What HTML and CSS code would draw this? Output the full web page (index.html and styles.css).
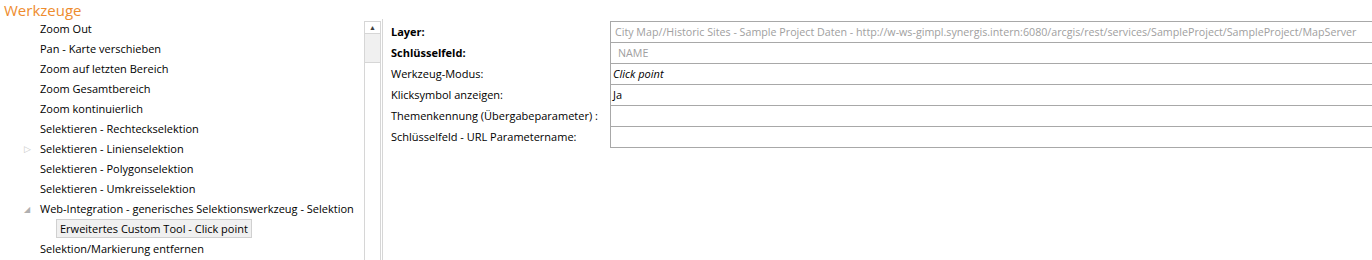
FILE: index.html
```html
<!DOCTYPE html>
<html lang="de">
<head>
    <meta charset="UTF-8">
    <title>Werkzeuge</title>
    <link rel="stylesheet" href="styles.css">
</head>
<body>
    <div class="title">Werkzeuge</div>
    <div class="main">
        <ul class="tree">
            <li>Zoom Out</li>
            <li>Pan - Karte verschieben</li>
            <li>Zoom auf letzten Bereich</li>
            <li>Zoom Gesamtbereich</li>
            <li>Zoom kontinuierlich</li>
            <li>Selektieren - Rechteckselektion</li>
            <li><span class="arrow closed">&#9655;</span>Selektieren - Linienselektion</li>
            <li>Selektieren - Polygonselektion</li>
            <li>Selektieren - Umkreisselektion</li>
            <li><span class="arrow open">&#9698;</span>Web-Integration - generisches Selektionswerkzeug - Selektion</li>
            <li class="child"><span class="selected">Erweitertes Custom Tool - Click point</span></li>
            <li>Selektion/Markierung entfernen</li>
        </ul>
        <div class="scrollbar">
            <div class="up"><span>&#9650;</span></div>
            <div class="thumb"></div>
        </div>
        <div class="divider"></div>
        <div class="props">
            <div class="label bold">Layer:</div>
            <div class="value grey">City Map//Historic Sites - Sample Project Daten - http://w-ws-gimpl.synergis.intern:6080/arcgis/rest/services/SampleProject/SampleProject/MapServer</div>
            <div class="label bold">Schlüsselfeld:</div>
            <div class="value grey indent">NAME</div>
            <div class="label">Werkzeug-Modus:</div>
            <div class="value italic">Click point</div>
            <div class="label">Klicksymbol anzeigen:</div>
            <div class="value">Ja</div>
            <div class="label">Themenkennung (Übergabeparameter) :</div>
            <div class="value"></div>
            <div class="label">Schlüsselfeld - URL Parametername:</div>
            <div class="value"></div>
        </div>
    </div>
</body>
</html>
```

FILE: styles.css
```css
body {
    margin: 0;
    padding: 0;
    font-family: "Open Sans", "Noto Sans", sans-serif;
    font-size: 11px;
    color: #000;
    background: #fff;
    overflow: hidden;
}

.title {
    height: 19px;
    line-height: 20px;
    padding-left: 4px;
    font-size: 15px;
    color: #ee8c2e;
}

.main {
    display: flex;
    align-items: stretch;
    height: 241px;
}

.tree {
    list-style: none;
    margin: 0;
    padding: 0;
    width: 364px;
}

.tree li {
    position: relative;
    height: 20px;
    line-height: 20px;
    padding-left: 40px;
    white-space: nowrap;
}

.tree li.child {
    padding-left: 56px;
}

.arrow {
    position: absolute;
    left: 24px;
    font-size: 9px;
    color: #c8c8c8;
}

.arrow.open {
    font-size: 8px;
    color: #b0b0b0;
}

.selected {
    display: inline-block;
    height: 17px;
    line-height: 17px;
    padding: 0 3px;
    background: #f0f0f0;
    border: 1px solid #d0d0d0;
}

.scrollbar {
    width: 15px;
    margin-top: 2px;
    border-left: 1px solid #d6d6d6;
    border-right: 1px solid #d6d6d6;
}

.up {
    height: 11px;
    border-top: 1px solid #d6d6d6;
    border-bottom: 1px solid #d6d6d6;
    text-align: center;
    font-size: 7px;
    line-height: 11px;
    color: #404040;
}

.thumb {
    height: 28px;
    background: #f0f0f0;
    border-bottom: 1px solid #d6d6d6;
}

.divider {
    width: 1px;
    margin-left: 1px;
    background: #d6d6d6;
}

.props {
    flex: 1;
    display: grid;
    grid-template-columns: 219px 1fr;
    grid-auto-rows: 21px;
    align-content: start;
    padding-top: 2px;
    padding-left: 8px;
}

.label {
    line-height: 21px;
    white-space: nowrap;
}

.bold {
    font-weight: bold;
}

.value {
    border-left: 1px solid #a8a8a8;
    border-top: 1px solid #a8a8a8;
    line-height: 20px;
    padding-left: 2px;
    white-space: nowrap;
    overflow: hidden;
}

.value:last-child {
    height: 20px;
    border-bottom: 1px solid #a8a8a8;
}

.grey {
    color: #a0a0a0;
    padding-left: 4px;
    font-size: 10.7px;
}

.indent {
    padding-left: 7px;
}

.italic {
    font-style: italic;
}
```
